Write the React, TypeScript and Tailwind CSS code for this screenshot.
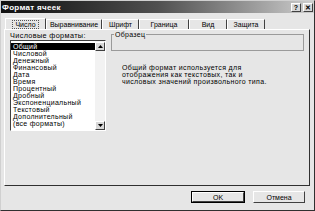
import { useState } from "react";

const FORMATS = [
  "Общий",
  "Числовой",
  "Денежный",
  "Финансовый",
  "Дата",
  "Время",
  "Процентный",
  "Дробный",
  "Экспоненциальный",
  "Текстовый",
  "Дополнительный",
  "(все форматы)",
];

const TABS = [
  { label: "Число", w: "w-[41px]" },
  { label: "Выравнивание", w: "w-[56px]" },
  { label: "Шрифт", w: "w-[37px]" },
  { label: "Граница", w: "w-[50px]" },
  { label: "Вид", w: "w-[38px]" },
  { label: "Защита", w: "w-[38px]" },
];

const bevelOut = "border border-t-white border-l-white border-r-[#404040] border-b-[#404040]";

function TitleButton({ children }: { children: React.ReactNode }) {
  return (
    <div
      className={`flex h-[9px] w-[10px] items-center justify-center bg-[#d8d8d8] text-[7px] font-bold leading-none text-black ${bevelOut}`}
    >
      {children}
    </div>
  );
}

function ScrollArrow({ up }: { up?: boolean }) {
  return (
    <div className={`flex h-[9px] w-[10px] items-center justify-center bg-[#d8d8d8] ${bevelOut}`}>
      <svg width="5" height="3" viewBox="0 0 5 3">
        <path d={up ? "M2.5 0 L5 3 L0 3 Z" : "M0 0 L5 0 L2.5 3 Z"} fill="#000" />
      </svg>
    </div>
  );
}

export default function App() {
  const [active, setActive] = useState(0);
  const [sel, setSel] = useState(0);

  return (
    <div
      className="flex h-[211px] w-[315px] flex-col overflow-hidden border border-t-[#d0d0d0] border-l-[#d0d0d0] border-r-[#303030] border-b-[#303030] bg-[#e6e6e6] text-[7px] leading-[7px] text-black"
      style={{ fontFamily: '"Liberation Sans", Arial, sans-serif' }}
    >
      {/* заголовок */}
      <div className="flex h-[12px] items-center justify-between bg-gradient-to-r from-[#101010] via-[#505050] to-[#cfcfcf] pl-[1px] pr-[1px]">
        <span className="text-[8px] font-bold tracking-[0.3px] text-white">Формат ячеек</span>
        <div className="flex gap-[2px]">
          <TitleButton>?</TitleButton>
          <TitleButton>✕</TitleButton>
        </div>
      </div>

      {/* вкладки */}
      <div className="mt-[5px] flex items-end pl-[4px]">
        {TABS.map((t, i) => (
          <button
            key={t.label}
            onClick={() => setActive(i)}
            className={`flex ${t.w} items-center justify-center border-r border-r-[#404040] border-l border-l-white ${
              i === active ? "h-[11px] border-t border-t-white" : "h-[10px] border-t border-t-white"
            }`}
          >
            <span
              className={`px-[2px] text-[7px] leading-[7px] ${
                i === active ? "outline outline-1 outline-dotted outline-[#555]" : ""
              }`}
            >
              {t.label}
            </span>
          </button>
        ))}
      </div>

      {/* панель */}
      <div className="ml-[3px] mr-[4px] flex h-[157px] border border-t-white border-l-white border-r-[#303030] border-b-[#303030] pl-[5px] pr-[5px] pt-[2px]">
        <div className="flex w-[96px] flex-col">
          <span className="h-[7px] text-[7.3px] tracking-[0.35px]">Числовые форматы:</span>
          <div className="mt-[1px] flex h-[91px] border border-t-[#404040] border-l-[#404040] border-r-white border-b-white bg-white">
            <div className="flex flex-1 flex-col pt-[2px]">
              {FORMATS.map((f, i) => (
                <div
                  key={f}
                  onClick={() => setSel(i)}
                  className={`h-[7px] pl-[2px] text-[7px] leading-[7px] tracking-[0.3px] ${
                    i === sel ? "bg-black text-white" : ""
                  }`}
                >
                  {f}
                </div>
              ))}
            </div>
            <div className="flex w-[10px] flex-col justify-between bg-[#f2f2f2] pt-[1px]">
              <ScrollArrow up />
              <ScrollArrow />
            </div>
          </div>
        </div>

        <div className="ml-[5px] flex flex-1 flex-col">
          <div className="relative mt-[2px] h-[17px] border border-[#9a9a9a]">
            <span className="absolute -top-[4px] left-[2px] bg-[#e6e6e6] px-[1px] text-[7px] leading-[7px] tracking-[0.3px]">
              Образец
            </span>
          </div>
          <p className="ml-[11px] mt-[13px] text-[7px] leading-[7px] tracking-[0.35px]">
            Общий формат используется для
            <br />
            отображения как текстовых, так и
            <br />
            числовых значений произвольного типа.
          </p>
        </div>
      </div>

      {/* кнопки */}
      <div className="mt-[5px] flex justify-end gap-[8px] pr-[9px]">
        <button className="flex h-[12px] w-[54px] items-center justify-center border border-black bg-[#e6e6e6] text-[7px]">
          <span className={`flex h-full w-full items-center justify-center ${bevelOut}`}>OK</span>
        </button>
        <button
          className={`flex h-[12px] w-[52px] items-center justify-center bg-[#e6e6e6] text-[7px] ${bevelOut}`}
        >
          Отмена
        </button>
      </div>
    </div>
  );
}
